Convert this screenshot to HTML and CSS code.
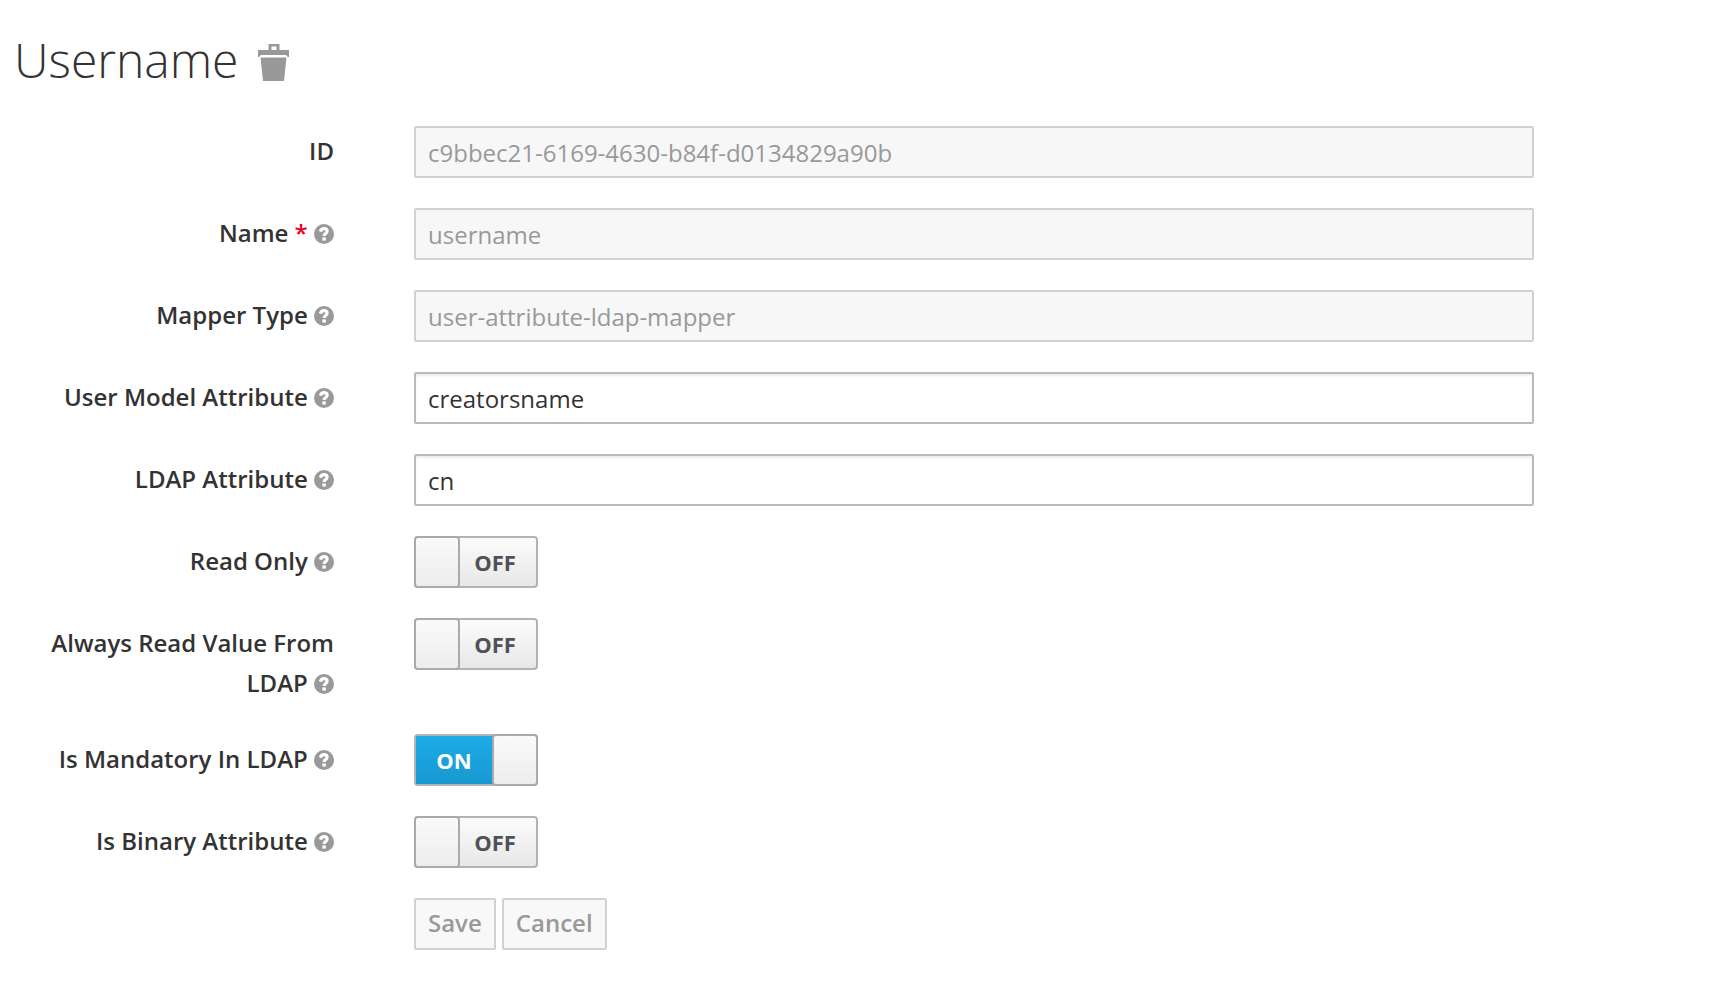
FILE: index.html
```html
<!DOCTYPE html>
<html lang="en">
<head>
  <meta charset="UTF-8" />
  <meta name="viewport" content="width=device-width, initial-scale=1" />
  <title>Username</title>
  <link rel="stylesheet" href="styles.css">
</head>
<body>
  <!-- shared help icon -->
  <svg class="sprite" aria-hidden="true">
    <symbol id="help" viewBox="0 0 20 20">
      <circle cx="10" cy="10" r="10" fill="#999" />
      <path d="M6.300 7.600C7 5.600 8.300 4.700 9.900 4.700c1.900 0 3.200 1.100 3.200 2.600 0 2.200-3 2.300-3 4.700" fill="none" stroke="#fff" stroke-width="3.200" />
      <rect x="8.400" y="13.400" width="3.400" height="3.200" fill="#fff" />
    </symbol>
  </svg>

  <header class="page-header">
    <h1>Username</h1>
    <button type="button" class="delete" aria-label="Delete mapper">
      <svg viewBox="0 0 32 38" width="32" height="38">
        <path fill="#999" fill-rule="evenodd" d="M10.500 0h11v6H31v7h-1l-2-2H3l-2 2H0V6h10.500zM13.500 2.500v3.500h5V2.500z" />
        <path fill="#999" d="M2.500 13.500h26L26 37H5z" />
      </svg>
    </button>
  </header>

  <form class="mapper-form">
    <div class="row">
      <label for="id">ID</label>
      <input type="text" id="id" class="text" value="c9bbec21-6169-4630-b84f-d0134829a90b" disabled />
    </div>
    <div class="row">
      <label for="name">Name <span class="required">*</span> <svg class="help"><use href="#help" /></svg></label>
      <input type="text" id="name" class="text" value="username" disabled />
    </div>
    <div class="row">
      <label for="mapperType">Mapper Type <svg class="help"><use href="#help" /></svg></label>
      <input type="text" id="mapperType" class="text" value="user-attribute-ldap-mapper" disabled />
    </div>
    <div class="row">
      <label for="userAttr">User Model Attribute <svg class="help"><use href="#help" /></svg></label>
      <input type="text" id="userAttr" class="text" value="creatorsname" />
    </div>
    <div class="row">
      <label for="ldapAttr">LDAP Attribute <svg class="help"><use href="#help" /></svg></label>
      <input type="text" id="ldapAttr" class="text" value="cn" />
    </div>
    <div class="row">
      <label for="readOnly">Read Only <svg class="help"><use href="#help" /></svg></label>
      <div class="switch">
        <input type="checkbox" id="readOnly" />
        <span class="on">ON</span><span class="handle"></span><span class="off">OFF</span>
      </div>
    </div>
    <div class="row">
      <label for="alwaysRead">Always Read Value From LDAP <svg class="help"><use href="#help" /></svg></label>
      <div class="switch">
        <input type="checkbox" id="alwaysRead" />
        <span class="on">ON</span><span class="handle"></span><span class="off">OFF</span>
      </div>
    </div>
    <div class="row">
      <label for="mandatory">Is Mandatory In LDAP <svg class="help"><use href="#help" /></svg></label>
      <div class="switch">
        <input type="checkbox" id="mandatory" checked />
        <span class="on">ON</span><span class="handle"></span><span class="off">OFF</span>
      </div>
    </div>
    <div class="row">
      <label for="binary">Is Binary Attribute <svg class="help"><use href="#help" /></svg></label>
      <div class="switch">
        <input type="checkbox" id="binary" />
        <span class="on">ON</span><span class="handle"></span><span class="off">OFF</span>
      </div>
    </div>
    <div class="row">
      <div class="actions">
        <button type="submit" class="btn" disabled>Save</button>
        <button type="button" class="btn" disabled>Cancel</button>
      </div>
    </div>
  </form>
</body>
</html>
```

FILE: styles.css
```css
* {
  box-sizing: border-box;
}

body {
  margin: 0;
  padding: 28px 186px 54px 14px;
  background: #fff;
  color: #333;
  font-family: 'Open Sans', sans-serif;
  font-size: 24px;
  line-height: 40px;
}

.sprite {
  display: none;
}

.page-header {
  display: flex;
  align-items: center;
  gap: 20px;
  margin-bottom: 30px;
}

h1 {
  margin: 0;
  padding-bottom: 4px;
  font-size: 48px;
  font-weight: 300;
  line-height: 64px;
}

.delete {
  padding: 2px 0 0;
  border: none;
  background: none;
  cursor: pointer;
}
.delete svg {
  display: block;
}

.mapper-form {
  display: flex;
  flex-direction: column;
  gap: 30px;
}

.row {
  display: grid;
  grid-template-columns: 320px 1fr;
  column-gap: 80px;
  align-items: start;
}
.row label {
  padding: 5px 0 1px;
  font-weight: 600;
  text-align: right;
}

.required {
  color: #f0001c;
}

.help {
  width: 20px;
  height: 20px;
  vertical-align: -2px;
}

.text {
  width: 100%;
  height: 52px;
  padding: 0 12px;
  border: 2px solid #bababa;
  border-radius: 2px;
  background: #fff;
  box-shadow: inset 0 2px 2px rgba(0, 0, 0, 0.08);
  color: #333;
  font: inherit;
}
.text:disabled {
  border-color: #d1d1d1;
  background: #f7f7f7;
  box-shadow: none;
  color: #999;
}

.switch {
  position: relative;
  display: flex;
  width: 124px;
  height: 52px;
  border: 2px solid #b3b3b3;
  border-radius: 4px;
  background: linear-gradient(#fcfcfc, #e7e7e7);
  font-size: 22px;
  font-weight: 700;
  line-height: 48px;
  text-align: center;
}
.switch input {
  position: absolute;
  inset: 0;
  width: 100%;
  height: 100%;
  margin: 0;
  opacity: 0;
  cursor: pointer;
}
.switch .on {
  display: none;
  flex: 1;
  padding-right: 2px;
  background: linear-gradient(#1cace8, #1998d0);
  color: #fff;
}
.switch .off {
  flex: 1;
  padding-right: 4px;
  color: #4d5258;
}
.switch .handle {
  width: 46px;
  height: 52px;
  margin: -2px;
  border: 2px solid #aaa;
  border-radius: 4px;
  background: linear-gradient(#fafafa, #ededed);
}
.switch input:checked ~ .on {
  display: block;
}
.switch input:checked ~ .off {
  display: none;
}

.actions {
  grid-column: 2;
  display: flex;
  gap: 6px;
}

.btn {
  height: 52px;
  padding: 0 12px 2px;
  border: 2px solid #d1d1d1;
  border-radius: 2px;
  background: #f8f8f8;
  color: #999;
  font: inherit;
  font-weight: 600;
}
```
